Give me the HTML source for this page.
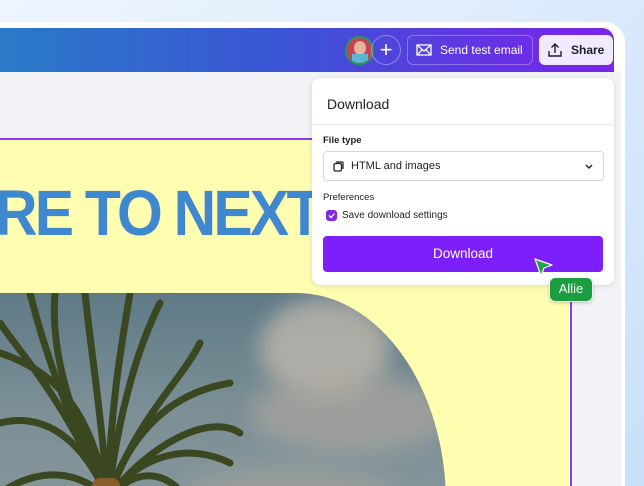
<!DOCTYPE html>
<html><head><meta charset="utf-8"><style>
*{margin:0;padding:0;box-sizing:border-box}
html,body{width:644px;height:486px;overflow:hidden}
body{position:relative;background:linear-gradient(135deg,#eef5fe 0%,#dcebfc 50%,#c9e0fa 100%);font-family:"Liberation Sans",sans-serif}
.win{position:absolute;left:0;top:22px;width:625px;height:464px;background:#fff;border-top-right-radius:20px}
.bar{position:absolute;left:0;top:28px;width:614px;height:44px;background:linear-gradient(90deg,#2a7bc9 0%,#3a55d4 45%,#6a2fe6 85%,#7a24ea 100%);border-top-right-radius:12px}
.gray{position:absolute;left:0;top:72px;width:621px;height:414px;background:#f1f3f6}
.canvas{position:absolute;left:0;top:138px;width:572px;height:348px;background:#fefdb0;border-top:2px solid #8b3cf0;border-right:2px solid #8b3cf0;overflow:hidden}
.head{position:absolute;left:-5px;top:36px;font-weight:bold;font-size:64px;color:#3f88d0;letter-spacing:-3px;white-space:nowrap;transform:scaleX(.92);transform-origin:left}
.photo{position:absolute;left:0;top:153px;width:446px;height:260px;border-top-right-radius:150px 210px;overflow:hidden;background:linear-gradient(180deg,#5f7a86 0%,#7b8f96 45%,#8a999c 100%)}
.panel{position:absolute;left:312px;top:78px;width:302px;height:207px;background:#fff;border-radius:8px;box-shadow:0 1px 6px rgba(0,0,0,.12)}
.btn{position:absolute;height:30px;border-radius:6px;font-size:12px;display:flex;align-items:center}
</style></head><body>
<div class="win"></div>
<div class="gray"></div>
<div class="bar"></div>
<div style="position:absolute;left:345px;top:36px;width:29px;height:29px;border-radius:50%;background:#c8415a;border:2px solid #1e9e4a;overflow:hidden"><div style="position:absolute;left:7px;top:3px;width:12px;height:14px;border-radius:50%;background:#e4b49a"></div><div style="position:absolute;left:5px;top:16px;width:16px;height:10px;background:#5ab7d6"></div></div>
<div style="position:absolute;left:371px;top:35px;width:30px;height:30px;border-radius:50%;border:1px solid rgba(255,255,255,.35);color:#fff;font-size:22px;line-height:27px;text-align:center">+</div>
<div class="btn" style="left:407px;top:35px;width:126px;border:1px solid rgba(255,255,255,.3);color:#fff">
<svg style="margin-left:8px" width="16" height="12" viewBox="0 0 16 12"><rect x="1" y="1" width="14" height="10" fill="none" stroke="#fff" stroke-width="1.3"/><path d="M1 1l7 6 7-6M1 11l5-5M15 11l-5-5" fill="none" stroke="#fff" stroke-width="1.3"/></svg>
<span style="margin-left:8px">Send test email</span></div>
<div class="btn" style="left:539px;top:35px;width:74px;background:#f1e9fd;color:#1e1e2a;font-weight:bold">
<svg style="margin-left:8px" width="16" height="16" viewBox="0 0 16 16"><path d="M8 11V2M4.5 5.5L8 2l3.5 3.5M2 9v5h12V9" fill="none" stroke="#1e1e2a" stroke-width="1.4"/></svg>
<span style="margin-left:8px">Share</span></div>
<div class="canvas">
<div class="head">RE TO NEXT</div>
<div class="photo">
<div style="position:absolute;left:260px;top:5px;width:130px;height:100px;border-radius:50%;background:rgba(195,185,175,.75);filter:blur(10px)"></div>
<div style="position:absolute;left:250px;top:80px;width:200px;height:80px;border-radius:50%;background:rgba(175,168,160,.65);filter:blur(12px)"></div>
<div style="position:absolute;left:180px;top:170px;width:220px;height:70px;border-radius:50%;background:rgba(170,165,158,.5);filter:blur(12px)"></div>
<svg width="446" height="260" style="position:absolute;left:0;top:0" viewBox="0 0 446 260">
<g fill="none" stroke="#3a4720" stroke-width="7" stroke-linecap="round">
<path d="M108 205 C90 120 60 80 0 60"/><path d="M108 205 C80 140 40 120 0 130"/><path d="M108 205 C70 170 30 180 0 200"/>
<path d="M108 205 C100 110 90 50 85 0"/><path d="M108 205 C120 110 140 50 160 10"/><path d="M108 205 C140 120 180 90 200 50"/>
<path d="M108 205 C150 150 210 120 240 140"/><path d="M108 205 C140 170 170 180 190 210"/><path d="M108 205 C60 110 40 40 30 0"/>
<path d="M108 205 C130 140 170 100 230 90"/><path d="M108 205 C110 120 120 60 130 0"/><path d="M108 205 C60 100 20 60 0 30"/>
<path d="M108 205 C70 120 50 60 55 0"/><path d="M108 205 C140 160 190 150 230 170"/>
</g>
<rect x="100" y="190" width="14" height="70" fill="#5b3e22"/>
<rect x="92" y="185" width="28" height="36" rx="8" fill="#8a5c2a"/>
</svg>
</div>
</div>
<div class="panel">
<div style="position:absolute;left:15px;top:18px;font-size:14px;color:#1e1e2a">Download</div>
<div style="position:absolute;left:0;top:46px;width:302px;height:1px;background:#e8e9ee"></div>
<div style="position:absolute;left:11px;top:57px;font-size:9.5px;font-weight:bold;color:#1e1e2a">File type</div>
<div style="position:absolute;left:11px;top:73px;width:281px;height:30px;border:1px solid #d4d6dc;border-radius:4px;font-size:11px;color:#1e1e2a;display:flex;align-items:center">
<svg style="margin-left:9px" width="11" height="11" viewBox="0 0 11 11"><rect x="1" y="2.5" width="7.5" height="7.5" rx="1.5" fill="none" stroke="#1e1e2a" stroke-width="1.3"/><path d="M3 1h6a1 1 0 0 1 1 1v6" fill="none" stroke="#1e1e2a" stroke-width="1.3"/></svg>
<span style="margin-left:7px">HTML and images</span>
<svg style="position:absolute;right:10px;top:12px" width="8" height="6" viewBox="0 0 8 6"><path d="M1 1l3 3 3-3" fill="none" stroke="#1e1e2a" stroke-width="1.4"/></svg></div>
<div style="position:absolute;left:11px;top:114px;font-size:9.5px;color:#1e1e2a">Preferences</div>
<div style="position:absolute;left:14px;top:132px;width:11px;height:11px;border-radius:3px;background:#7d2ae8"><svg width="11" height="11" viewBox="0 0 11 11" style="position:absolute;left:0;top:0"><path d="M3 5.5l2 2 3.5-4" fill="none" stroke="#fff" stroke-width="1.3"/></svg></div>
<div style="position:absolute;left:30px;top:132px;font-size:10px;color:#1e1e2a">Save download settings</div>
<div style="position:absolute;left:11px;top:158px;width:280px;height:36px;border-radius:4px;background:#7c1ffa;color:#fff;font-size:13.5px;text-align:center;line-height:36px">Download</div>
</div>
<svg style="position:absolute;left:533px;top:257px" width="22" height="22" viewBox="0 0 22 22"><path d="M2 2L19 8 11 11 8 19Z" fill="#1ea34b" stroke="#fff" stroke-width="1.2" stroke-linejoin="round"/></svg>
<div style="position:absolute;left:549px;top:277px;width:44px;height:25px;border-radius:6px;background:#1a9e3f;border:1.5px solid #fff;box-shadow:0 1px 3px rgba(0,0,0,.2);color:#fff;font-size:13px;line-height:22px;text-align:center">Allie</div>
</body></html>
